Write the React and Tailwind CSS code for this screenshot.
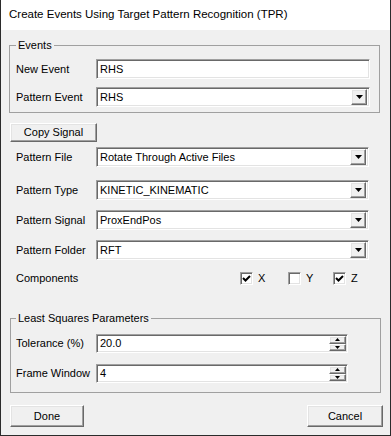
import React from 'react'

const sunken =
  'bg-white border border-t-[#a0a0a0] border-l-[#a0a0a0] border-r-white border-b-white shadow-[inset_1px_1px_0_#696969,inset_-1px_-1px_0_#e3e3e3]'
const raised =
  'bg-[#f0f0f0] border border-t-white border-l-white border-r-[#696969] border-b-[#696969] shadow-[inset_-1px_-1px_0_#a0a0a0,inset_1px_1px_0_#e3e3e3]'

const DownArrow = () => (
  <svg width="7" height="4" viewBox="0 0 7 4">
    <path d="M0 0 H7 L3.5 4 Z" fill="#000" />
  </svg>
)

const TextBox = ({ value }) => (
  <div className={`${sunken} h-[20px] flex-1 flex items-center pl-[3px]`}>{value}</div>
)

const Combo = ({ value }) => (
  <div className={`${sunken} h-[20px] flex-1 flex items-center pl-[3px] pr-[2px]`}>
    <span className="flex-1">{value}</span>
    <div className={`${raised} w-[16px] h-[16px] flex items-center justify-center`}>
      <DownArrow />
    </div>
  </div>
)

const Spin = ({ value }) => (
  <div className={`${sunken} h-[19px] w-[252px] flex items-center pl-[3px] pr-[1px]`}>
    <span className="flex-1">{value}</span>
    <div className="flex flex-col w-[17px] h-[15px]">
      <div className={`${raised} flex-1 flex items-center justify-center`}>
        <svg width="5" height="3" viewBox="0 0 5 3"><path d="M0 3 H5 L2.5 0 Z" fill="#000" /></svg>
      </div>
      <div className={`${raised} flex-1 flex items-center justify-center`}>
        <svg width="5" height="3" viewBox="0 0 5 3"><path d="M0 0 H5 L2.5 3 Z" fill="#000" /></svg>
      </div>
    </div>
  </div>
)

const Check = ({ label, checked, className }) => (
  <div className={`flex items-center gap-[5px] ${className}`}>
    <div className={`${sunken} w-[13px] h-[13px] flex items-center justify-center`}>
      {checked && (
        <svg width="9" height="9" viewBox="0 0 9 9">
          <path d="M1 4 L3.5 6.5 L8 2" stroke="#000" strokeWidth="2" fill="none" />
        </svg>
      )}
    </div>
    <span>{label}</span>
  </div>
)

const Row = ({ label, children, className = '' }) => (
  <div className={`flex items-center ${className}`}>
    <span className="w-[80px] shrink-0">{label}</span>
    {children}
  </div>
)

export default function App() {
  return (
    <div className="w-[391px] h-[436px] flex flex-col bg-[#f0f0f0] border-x border-b border-[#2b2b2b] font-['Liberation_Sans',Arial,sans-serif] text-[11px] text-black leading-none">
      <div className="h-[30px] shrink-0 bg-white flex items-center pl-[8px] text-[11.5px]">
        Create Events Using Target Pattern Recognition (TPR)
      </div>

      <fieldset className="mt-[8px] ml-[8px] mr-[10px] border border-[#a0a0a0] pl-[6px] pr-[9px] pt-[7px] pb-[5px]">
        <legend className="px-[2px] h-[14px] leading-[14px]">Events</legend>
        <Row label="New Event">
          <TextBox value="RHS" />
        </Row>
        <Row label="Pattern Event" className="mt-[8px]">
          <Combo value="RHS" />
        </Row>
      </fieldset>

      <button className={`${raised} mt-[10px] ml-[9px] w-[87px] h-[19px] flex items-center justify-center`}>
        Copy Signal
      </button>

      <div className="ml-[15px] mr-[21px] flex flex-col">
        <Row label="Pattern File" className="mt-[5px]">
          <Combo value="Rotate Through Active Files" />
        </Row>
        <Row label="Pattern Type" className="mt-[13px]">
          <Combo value="KINETIC_KINEMATIC" />
        </Row>
        <Row label="Pattern Signal" className="mt-[10px]">
          <Combo value="ProxEndPos" />
        </Row>
        <Row label="Pattern Folder" className="mt-[10px]">
          <Combo value="RFT" />
        </Row>
        <Row label="Components" className="mt-[12px] h-[13px]">
          <div className="ml-[144px] flex items-center">
            <Check label="X" checked className="w-[48px]" />
            <Check label="Y" className="w-[45px]" />
            <Check label="Z" checked />
          </div>
        </Row>
      </div>

      <fieldset className="mt-[26px] ml-[9px] mr-[9px] border border-[#a0a0a0] pl-[5px] pt-[9px] pb-[9px]">
        <legend className="px-[2px] h-[14px] leading-[14px]">Least Squares Parameters</legend>
        <Row label="Tolerance (%)">
          <Spin value="20.0" />
        </Row>
        <Row label="Frame Window" className="mt-[11px]">
          <Spin value="4" />
        </Row>
      </fieldset>

      <div className="mt-[12px] ml-[9px] mr-[7px] flex justify-between">
        <button className={`${raised} w-[74px] h-[22px] flex items-center justify-center`}>Done</button>
        <button className={`${raised} w-[76px] h-[22px] flex items-center justify-center`}>Cancel</button>
      </div>
    </div>
  )
}
